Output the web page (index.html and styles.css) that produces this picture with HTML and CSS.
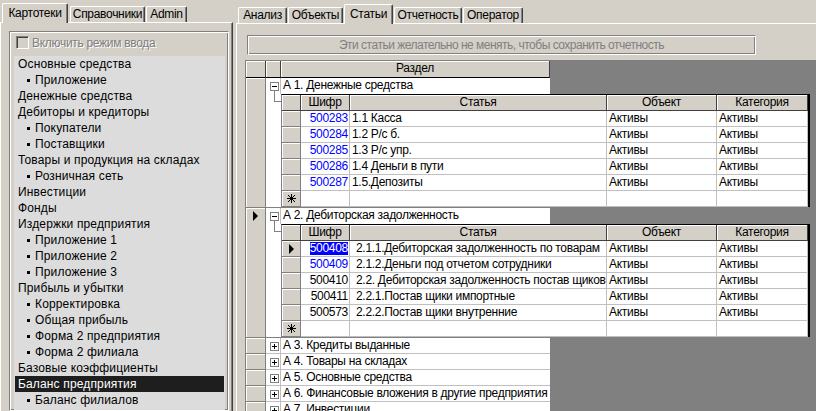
FILE: index.html
```html
<!DOCTYPE html>
<html>
<head>
<meta charset="utf-8">
<link rel="stylesheet" href="styles.css">
</head>
<body>
<div class="app">
  <div class="left">
    <div class="tabs">
      <div class="tab sel t-kart">Картотеки</div>
      <div class="tab t-spr">Справочники</div>
      <div class="tab t-adm">Admin</div>
    </div>
    <div class="page">
      <div class="group">
        <div class="check"><span class="cbox"></span><span class="dis">Включить режим ввода</span></div>
        <div class="list">
          <div class="item">Основные средства</div>
          <div class="item sub">Приложение</div>
          <div class="item">Денежные средства</div>
          <div class="item">Дебиторы и кредиторы</div>
          <div class="item sub">Покупатели</div>
          <div class="item sub">Поставщики</div>
          <div class="item">Товары и продукция на складах</div>
          <div class="item sub">Розничная сеть</div>
          <div class="item">Инвестиции</div>
          <div class="item">Фонды</div>
          <div class="item">Издержки предприятия</div>
          <div class="item sub">Приложение 1</div>
          <div class="item sub">Приложение 2</div>
          <div class="item sub">Приложение 3</div>
          <div class="item">Прибыль и убытки</div>
          <div class="item sub">Корректировка</div>
          <div class="item sub">Общая прибыль</div>
          <div class="item sub">Форма 2 предприятия</div>
          <div class="item sub">Форма 2 филиала</div>
          <div class="item">Базовые коэффициенты</div>
          <div class="item sel">Баланс предприятия</div>
          <div class="item sub">Баланс филиалов</div>
        </div>
      </div>
    </div>
  </div>
  <div class="split"></div>
  <div class="right">
    <div class="rtabs">
      <div class="tab t-an">Анализ</div>
      <div class="tab t-ob">Объекты</div>
      <div class="tab sel t-st">Статьи</div>
      <div class="tab t-ot">Отчетность</div>
      <div class="tab t-op">Оператор</div>
    </div>
    <div class="rpage">
      <div class="btn">Эти статьи желательно не менять, чтобы сохранить отчетность</div>
      <div class="grid">
        <div class="ghead">
          <div class="hc hind"></div>
          <div class="hc hexp"></div>
          <div class="hc hraz">Раздел</div>
        </div>

        <div class="mrow">
          <div class="ind"></div>
          <div class="mbody">
            <div class="mline">
              <div class="mexp"><span class="pm minus"></span><span class="stub"></span></div>
              <div class="mtext">А 1. Денежные средства</div>
            </div>
            <div class="nest">
              <div class="nexp"><div class="tree"></div></div>
              <div class="ngrid">
                <div class="nh"></div><div class="nh">Шифр</div><div class="nh">Статья</div><div class="nh">Объект</div><div class="nh">Категория</div>
                <div class="ni"></div><div class="nc num blue">500283</div><div class="nc">1.1 Касса</div><div class="nc">Активы</div><div class="nc">Активы</div>
                <div class="ni"></div><div class="nc num blue">500284</div><div class="nc">1.2 Р/с б.</div><div class="nc">Активы</div><div class="nc">Активы</div>
                <div class="ni"></div><div class="nc num blue">500285</div><div class="nc">1.3 Р/с упр.</div><div class="nc">Активы</div><div class="nc">Активы</div>
                <div class="ni"></div><div class="nc num blue">500286</div><div class="nc">1.4 Деньги в пути</div><div class="nc">Активы</div><div class="nc">Активы</div>
                <div class="ni"></div><div class="nc num blue">500287</div><div class="nc">1.5.Депозиты</div><div class="nc">Активы</div><div class="nc">Активы</div>
                <div class="ni"><svg class="ast" width="9" height="9" viewBox="0 0 9 9"><path d="M4.5 0V9M0 4.5H9M1 1L8 8M8 1L1 8" stroke="#000" stroke-width="1" fill="none"/></svg></div><div class="nc"></div><div class="nc"></div><div class="nc"></div><div class="nc"></div>
              </div>
            </div>
          </div>
        </div>

        <div class="mrow">
          <div class="ind top"><span class="arrow"></span></div>
          <div class="mbody">
            <div class="mline">
              <div class="mexp"><span class="pm minus"></span><span class="stub"></span></div>
              <div class="mtext">А 2. Дебиторская задолженность</div>
            </div>
            <div class="nest">
              <div class="nexp"><div class="tree"></div></div>
              <div class="ngrid g2">
                <div class="nh"></div><div class="nh">Шифр</div><div class="nh">Статья</div><div class="nh">Объект</div><div class="nh">Категория</div>
                <div class="ni"><span class="arrow"></span></div><div class="nc num"><span class="hl">500408</span></div><div class="nc st">2.1.1.Дебиторская задолженность по товарам</div><div class="nc">Активы</div><div class="nc">Активы</div>
                <div class="ni"></div><div class="nc num blue">500409</div><div class="nc st">2.1.2.Деньги под отчетом сотрудники</div><div class="nc">Активы</div><div class="nc">Активы</div>
                <div class="ni"></div><div class="nc num">500410</div><div class="nc st">2.2. Дебиторская задолженность постав щиков</div><div class="nc">Активы</div><div class="nc">Активы</div>
                <div class="ni"></div><div class="nc num">500411</div><div class="nc st">2.2.1.Постав щики импортные</div><div class="nc">Активы</div><div class="nc">Активы</div>
                <div class="ni"></div><div class="nc num">500573</div><div class="nc st">2.2.2.Постав щики внутренние</div><div class="nc">Активы</div><div class="nc">Активы</div>
                <div class="ni"><svg class="ast" width="9" height="9" viewBox="0 0 9 9"><path d="M4.5 0V9M0 4.5H9M1 1L8 8M8 1L1 8" stroke="#000" stroke-width="1" fill="none"/></svg></div><div class="nc"></div><div class="nc"></div><div class="nc"></div><div class="nc"></div>
              </div>
            </div>
          </div>
        </div>

        <div class="mrow">
          <div class="ind"></div>
          <div class="mbody">
            <div class="mline closed">
              <div class="mexp"><span class="pm plus"></span></div>
              <div class="mtext">А 3. Кредиты выданные</div>
            </div>
          </div>
        </div>
        <div class="mrow">
          <div class="ind"></div>
          <div class="mbody">
            <div class="mline closed">
              <div class="mexp"><span class="pm plus"></span></div>
              <div class="mtext">А 4. Товары на складах</div>
            </div>
          </div>
        </div>
        <div class="mrow">
          <div class="ind"></div>
          <div class="mbody">
            <div class="mline closed">
              <div class="mexp"><span class="pm plus"></span></div>
              <div class="mtext">А 5. Основные средства</div>
            </div>
          </div>
        </div>
        <div class="mrow">
          <div class="ind"></div>
          <div class="mbody">
            <div class="mline closed">
              <div class="mexp"><span class="pm plus"></span></div>
              <div class="mtext">А 6. Финансовые вложения в другие предприятия</div>
            </div>
          </div>
        </div>
        <div class="mrow">
          <div class="ind"></div>
          <div class="mbody">
            <div class="mline closed">
              <div class="mexp"><span class="pm plus"></span></div>
              <div class="mtext">А 7. Инвестиции</div>
            </div>
          </div>
        </div>
      </div>
    </div>
  </div>
</div>
</body>
</html>
```

FILE: styles.css
```css
* { box-sizing: border-box; }
html, body { margin: 0; padding: 0; }
body {
  width: 816px;
  height: 411px;
  overflow: hidden;
  background: #D4D0C8;
  font-family: "Liberation Sans", Arial, sans-serif;
  font-size: 12px;
  color: #000;
}
.app { display: flex; height: 411px; }

/* tabs */
.tab {
  flex: none;
  height: 16px;
  line-height: 15px;
  text-align: center;
  white-space: nowrap;
  letter-spacing: -0.3px;
  background: #D4D0C8;
  border-top: 1px solid #fff;
  border-left: 1px solid #fff;
  border-right: 1px solid #404040;
  box-shadow: inset -1px 0 #808080;
  border-radius: 2px 2px 0 0;
}
.tab.sel {
  height: 20px;
  line-height: 18px;
  margin-bottom: -1px;
  position: relative;
  z-index: 2;
}

/* left side */
.left { width: 233px; flex: none; display: flex; flex-direction: column; }
.tabs { height: 22px; display: flex; align-items: flex-end; padding-left: 2px; position: relative; z-index: 1; }
.t-kart { width: 66px; }
.t-spr { width: 75px; margin-left: 2px; }
.t-adm { width: 41px; margin-left: 1px; }
.page {
  flex: 1;
  display: flex;
  flex-direction: column;
  min-height: 0;
  border-top: 1px solid #fff;
  border-left: 1px solid #fff;
  border-right: 1px solid #404040;
  box-shadow: inset -1px 0 #808080;
  padding: 8px 3px 0 8px;
}
.group {
  flex: 1;
  display: flex;
  flex-direction: column;
  min-height: 0;
  border: 1px solid;
  border-color: #808080 #fff #fff #808080;
  box-shadow: inset 1px 1px #fff, inset -1px -1px #808080;
  padding: 4px 3px 0 4px;
}
.check { display: flex; align-items: center; height: 13px; margin-left: 2px; }
.cbox {
  width: 13px;
  height: 13px;
  flex: none;
  border: 1px solid;
  border-color: #808080 #fff #fff #808080;
  box-shadow: inset 1px 1px #404040, inset -1px -1px #D4D0C8;
  background: #D4D0C8;
}
.dis { margin-left: 3px; color: #808080; text-shadow: 1px 1px #fff; white-space: nowrap; letter-spacing: -0.3px; }
.list { flex: 1; margin-top: 7px; background: #DCDCDC; overflow: hidden; letter-spacing: 0.15px; }
.item { height: 16px; line-height: 16px; padding-left: 4px; white-space: nowrap; }
.item.sub { display: flex; align-items: center; padding-left: 13px; }
.item.sub::before { content: ""; width: 3px; height: 3px; background: #000; margin-right: 5px; flex: none; }
.item.sel { background: #1E1E1E; color: #fff; margin: 0 1px; padding-left: 3px; }

.split { width: 3px; flex: none; }

/* right side */
.right { flex: 1; min-width: 0; display: flex; flex-direction: column; }
.rtabs { height: 23px; display: flex; align-items: flex-end; padding-left: 2px; position: relative; z-index: 1; }
.rtabs .tab { margin-right: 1px; }
.t-an { width: 49px; }
.t-ob { width: 55px; }
.t-st { width: 49px; }
.t-ot { width: 68px; }
.t-op { width: 60px; }
.rpage {
  flex: 1;
  min-height: 0;
  display: flex;
  flex-direction: column;
  border-top: 1px solid #fff;
  border-left: 1px solid #fff;
  padding: 11px 0 0 8px;
}
.btn {
  width: 509px;
  height: 20px;
  margin-left: 2px;
  border: 1px solid;
  border-color: #808080 #fff #fff #808080;
  box-shadow: inset 1px 1px #fff, inset -1px -1px #808080;
  color: #808080;
  text-align: center;
  line-height: 18px;
  white-space: nowrap;
  letter-spacing: -0.5px;
}

/* main grid */
.grid {
  flex: 1;
  min-height: 0;
  margin-top: 5px;
  background: #808080;
  border-top: 1px solid #808080;
  border-left: 1px solid #808080;
  overflow: hidden;
  letter-spacing: -0.3px;
}
.ghead { display: flex; height: 17px; }
.hc {
  background: #D4D0C8;
  box-shadow: inset 1px 1px #fff;
  border-right: 1px solid #404040;
  border-bottom: 1px solid #000;
  text-align: center;
  line-height: 15px;
}
.hind { width: 20px; }
.hexp { width: 15px; }
.hraz { width: 269px; }

.mrow { display: flex; }
.ind {
  width: 20px;
  flex: none;
  background: #D4D0C8;
  box-shadow: inset 1px 1px #fff;
  border-right: 1px solid #808080;
  border-bottom: 1px solid #808080;
  display: flex;
  justify-content: center;
}
.ind.top { padding-top: 3px; align-items: flex-start; }
.mbody { display: flex; flex-direction: column; }
.mline { display: flex; width: 284px; height: 16px; background: #fff; }
.mline.closed { border-bottom: 1px solid #C0C0C0; }
.mexp {
  width: 15px;
  flex: none;
  border-right: 1px solid #C0C0C0;
  padding: 4px 0 0 4px;
  display: flex;
  flex-direction: column;
}
.mtext { flex: 1; padding-left: 2px; line-height: 15px; white-space: nowrap; overflow: hidden; }
.pm {
  display: block;
  width: 9px;
  height: 9px;
  border: 1px solid #808080;
  background: #fff;
  position: relative;
  flex: none;
}
.pm::before {
  content: "";
  position: absolute;
  left: 1px;
  top: 3px;
  width: 5px;
  height: 1px;
  background: #000;
}
.pm.plus::after {
  content: "";
  position: absolute;
  left: 3px;
  top: 1px;
  width: 1px;
  height: 5px;
  background: #000;
}
.stub { display: block; width: 1px; height: 3px; margin-left: 4px; background: #808080; }

.nest { display: flex; margin-bottom: 1px; }
.nexp { width: 15px; flex: none; background: #fff; }
.tree {
  margin-left: 8px;
  width: 7px;
  height: 8px;
  border-left: 1px solid #808080;
  border-bottom: 1px solid #808080;
}
.ngrid {
  width: 529px;
  flex: none;
  background: #fff;
  border-top: 1px solid #000;
  border-left: 1px solid #808080;
  border-right: 2px solid #000;
  display: grid;
  grid-template-columns: 19px 49px 257px 110px 91px;
  grid-auto-rows: 16px;
}
.nh {
  background: #D4D0C8;
  box-shadow: inset 1px 1px #fff;
  border-right: 1px solid #404040;
  border-bottom: 1px solid #404040;
  text-align: center;
  line-height: 15px;
  white-space: nowrap;
}
.ni {
  background: #D4D0C8;
  box-shadow: inset 1px 1px #fff;
  border-right: 1px solid #808080;
  border-bottom: 1px solid #808080;
  display: flex;
  align-items: center;
  justify-content: center;
}
.nc {
  border-right: 1px solid #C0C0C0;
  border-bottom: 1px solid #C0C0C0;
  padding: 0 2px;
  line-height: 15px;
  white-space: nowrap;
  overflow: hidden;
}
.nc.num { text-align: right; padding-right: 1px; }
.nc.blue { color: #0000FF; }
.g2 .nc.st { padding-left: 6px; }
.hl { background: #0000FF; color: #fff; display: inline-block; line-height: 13px; }
.arrow {
  display: block;
  width: 0;
  height: 0;
  border-left: 5px solid #000;
  border-top: 5px solid transparent;
  border-bottom: 5px solid transparent;
}
.ast { display: block; }
```
